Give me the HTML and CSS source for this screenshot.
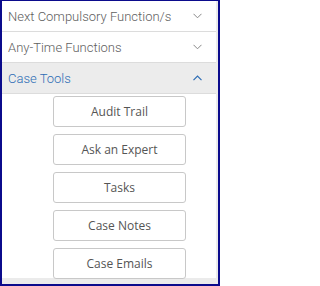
FILE: index.html
```html
<!DOCTYPE html>
<html>
<head>
<meta charset="utf-8">
<link rel="stylesheet" href="styles.css">
</head>
<body>
<div class="frame">
  <div class="panel">
    <div class="row">
      <span class="label">Next Compulsory Function/s</span>
      <svg class="chev" width="9" height="6" viewBox="0 0 9 6"><path d="M0.5 0.8 L4.5 4.8 L8.5 0.8" fill="none" stroke="#888" stroke-width="1"/></svg>
    </div>
    <div class="row">
      <span class="label">Any-Time Functions</span>
      <svg class="chev" width="9" height="6" viewBox="0 0 9 6"><path d="M0.5 0.8 L4.5 4.8 L8.5 0.8" fill="none" stroke="#888" stroke-width="1"/></svg>
    </div>
    <div class="row active">
      <span class="label">Case Tools</span>
      <svg class="chev" width="9" height="6" viewBox="0 0 9 6"><path d="M0.5 5.2 L4.5 1.2 L8.5 5.2" fill="none" stroke="#2d6db5" stroke-width="1.2"/></svg>
    </div>
    <div class="tools">
      <button class="btn">Audit Trail</button>
      <button class="btn">Ask an Expert</button>
      <button class="btn">Tasks</button>
      <button class="btn">Case Notes</button>
      <button class="btn">Case Emails</button>
    </div>
  </div>
</div>
</body>
</html>
```
FILE: styles.css
```css
html, body { margin: 0; padding: 0; }
body { width: 220px; height: 286px; overflow: hidden; }
.frame {
  box-sizing: border-box;
  width: 220px;
  height: 286px;
  border: 2px solid #0b0b8c;
  border-top-width: 1px;
  background: #ebebeb;
  padding: 0 2px 6px 0;
}
.panel {
  background: #fff;
  height: 100%;
}
.row {
  display: flex;
  align-items: center;
  justify-content: space-between;
  height: 30px;
  border-bottom: 1px solid #dcdcdc;
  padding: 0 14px 0 6px;
  font-family: "Roboto", sans-serif;
  font-size: 13px;
  font-weight: 300;
  color: #606060;
}
.row.active { background: #ececec; color: #2d6db5; }
.chev { display: block; }
.tools {
  display: flex;
  flex-direction: column;
  gap: 7px;
  padding: 2px 0 0 51px;
}
.btn {
  box-sizing: border-box;
  width: 133px;
  height: 31px;
  background: #fff;
  border: 1px solid #c8c8c8;
  border-radius: 3px;
  font-family: "Open Sans", sans-serif;
  font-size: 12px;
  color: #555;
  padding: 0;
}
```
